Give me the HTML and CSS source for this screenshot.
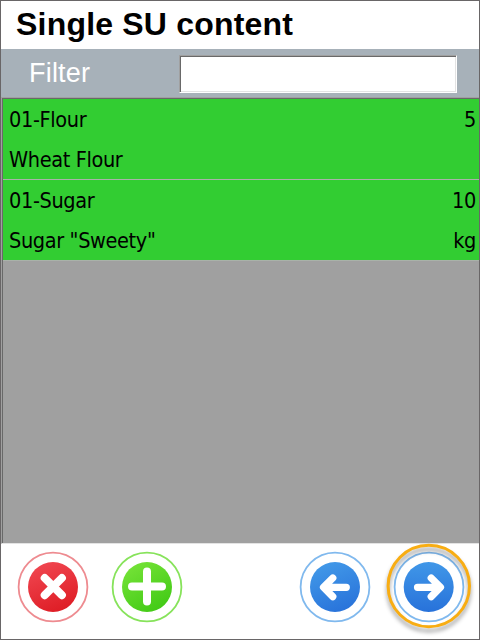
FILE: index.html
```html
<!DOCTYPE html>
<html lang="en">
<head>
<meta charset="utf-8">
<title>Single SU content</title>
<link rel="stylesheet" href="styles.css">
</head>
<body>
<main class="window">
  <h1 class="title">Single SU content</h1>
  <div class="filter">
    <label class="filter-label" for="filter">Filter</label>
    <input class="filter-input" id="filter" type="text">
  </div>
  <div class="list">
    <div class="item">
      <div class="line"><span>01-Flour</span><span>5</span></div>
      <div class="line"><span>Wheat Flour</span></div>
    </div>
    <div class="item">
      <div class="line"><span>01-Sugar</span><span>10</span></div>
      <div class="line"><span>Sugar "Sweety"</span><span>kg</span></div>
    </div>
  </div>
  <footer class="actions">
    <svg class="icon" viewBox="0 0 94 94">
      <defs><linearGradient id="red" x1="0.3" y1="0" x2="0.7" y2="1"><stop offset="0" stop-color="#f04650"/><stop offset="1" stop-color="#de1c24"/></linearGradient></defs>
      <circle cx="47" cy="47" r="34.4" fill="#fff" stroke="#ee8b90" stroke-width="1.8"/>
      <circle cx="47" cy="47" r="25" fill="url(#red)"/>
      <path d="M38.7 38 55.9 55.2M55.9 38 38.7 55.2" stroke="#fff" stroke-width="8" stroke-linecap="round"/>
    </svg>
    <svg class="icon" viewBox="0 0 94 94">
      <defs><linearGradient id="green" x1="0.2" y1="0" x2="0.8" y2="1"><stop offset="0" stop-color="#76e338"/><stop offset="1" stop-color="#3fc914"/></linearGradient></defs>
      <circle cx="47" cy="47" r="34.4" fill="#fff" stroke="#87e35b" stroke-width="1.8"/>
      <circle cx="47" cy="47" r="25" fill="url(#green)"/>
      <path d="M47 31.5V61.5M32 46.5H62" stroke="#fff" stroke-width="8" stroke-linecap="round"/>
    </svg>
    <svg class="icon back" viewBox="0 0 94 94">
      <defs><linearGradient id="blue" x1="0.3" y1="0" x2="0.7" y2="1"><stop offset="0" stop-color="#4299e8"/><stop offset="1" stop-color="#2872da"/></linearGradient></defs>
      <circle cx="47" cy="47" r="34.4" fill="#fff" stroke="#80b9ee" stroke-width="1.8"/>
      <circle cx="47" cy="47" r="25" fill="url(#blue)"/>
      <path d="M58.3 47.3H36M44.8 38 35.5 47.3 44.8 56.6" fill="none" stroke="#fff" stroke-width="7.2" stroke-linecap="round" stroke-linejoin="round"/>
    </svg>
    <svg class="icon" viewBox="0 0 94 94">
      <defs><linearGradient id="blue2" x1="0.5" y1="0" x2="0.5" y2="1"><stop offset="0" stop-color="#4097e8"/><stop offset="1" stop-color="#2872da"/></linearGradient></defs>
      <circle cx="47" cy="47" r="34.4" stroke="#80b9ee" stroke-width="1.8" fill="none"/>
      <circle cx="46.7" cy="47" r="25" fill="url(#blue2)"/>
      <path d="M35.5 47.3H58M49.2 38 58.5 47.3 49.2 56.6" fill="none" stroke="#fff" stroke-width="7.2" stroke-linecap="round" stroke-linejoin="round"/>
      <circle class="highlight" cx="46.8" cy="46" r="40.7"/>
    </svg>
  </footer>
</main>
</body>
</html>
```
FILE: styles.css
```css
* { box-sizing: border-box; }
body { margin: 0; }
.window {
  width: 480px;
  height: 640px;
  display: flex;
  flex-direction: column;
  border: 1px solid #696667;
  background: #fff;
  overflow: hidden;
}
.title {
  height: 48px;
  margin: 0;
  padding-left: 15px;
  font: bold 32px/46px "Liberation Sans", Arial, sans-serif;
  letter-spacing: 0.2px;
  color: #000;
}
.filter {
  height: 48px;
  display: flex;
  padding: 6px 22px 0 28px;
  background: #a7b1b9;
}
.filter-label {
  flex: 1;
  font: 27px/36px "Liberation Sans", Arial, sans-serif;
  letter-spacing: 0.2px;
  color: #fff;
}
.filter-input {
  width: 278px;
  height: 38px;
  border: 1px solid;
  border-color: #a0a0a0 #fff #fff #a0a0a0;
  box-shadow: inset 1px 1px #696969, inset -1px -1px #e3e3e3;
  background: #fff;
  outline: 0;
}
.list {
  height: 447px;
  border: solid;
  border-width: 1px 0 1px 1px;
  border-color: #a0a0a0 #e3e3e3 #e3e3e3 #a0a0a0;
  box-shadow: inset 1px 1px #696969;
  background: #a0a0a0;
  padding: 1px 0 0 1px;
}
.item {
  height: 81px;
  background: #32cd32;
  border-bottom: 1px solid #a9b2a9;
  color: #000;
  font: 21.5px/42px "DejaVu Sans Condensed", "DejaVu Sans", sans-serif;
  font-stretch: condensed;
}
.line {
  height: 40px;
  display: flex;
  justify-content: space-between;
  padding: 0 3px 0 6px;
  letter-spacing: -0.36px;
  white-space: pre;
}
.actions {
  flex: 1;
  display: flex;
  padding-left: 5px;
}
.icon {
  flex: none;
  width: 94px;
  height: 94px;
  margin-top: -4px;
  overflow: visible;
}
.back { margin-left: 94px; }
.highlight {
  fill: none;
  stroke: #f8ad13;
  stroke-width: 3;
  filter: drop-shadow(0 4px 2px rgba(0, 0, 0, .4));
}
```
